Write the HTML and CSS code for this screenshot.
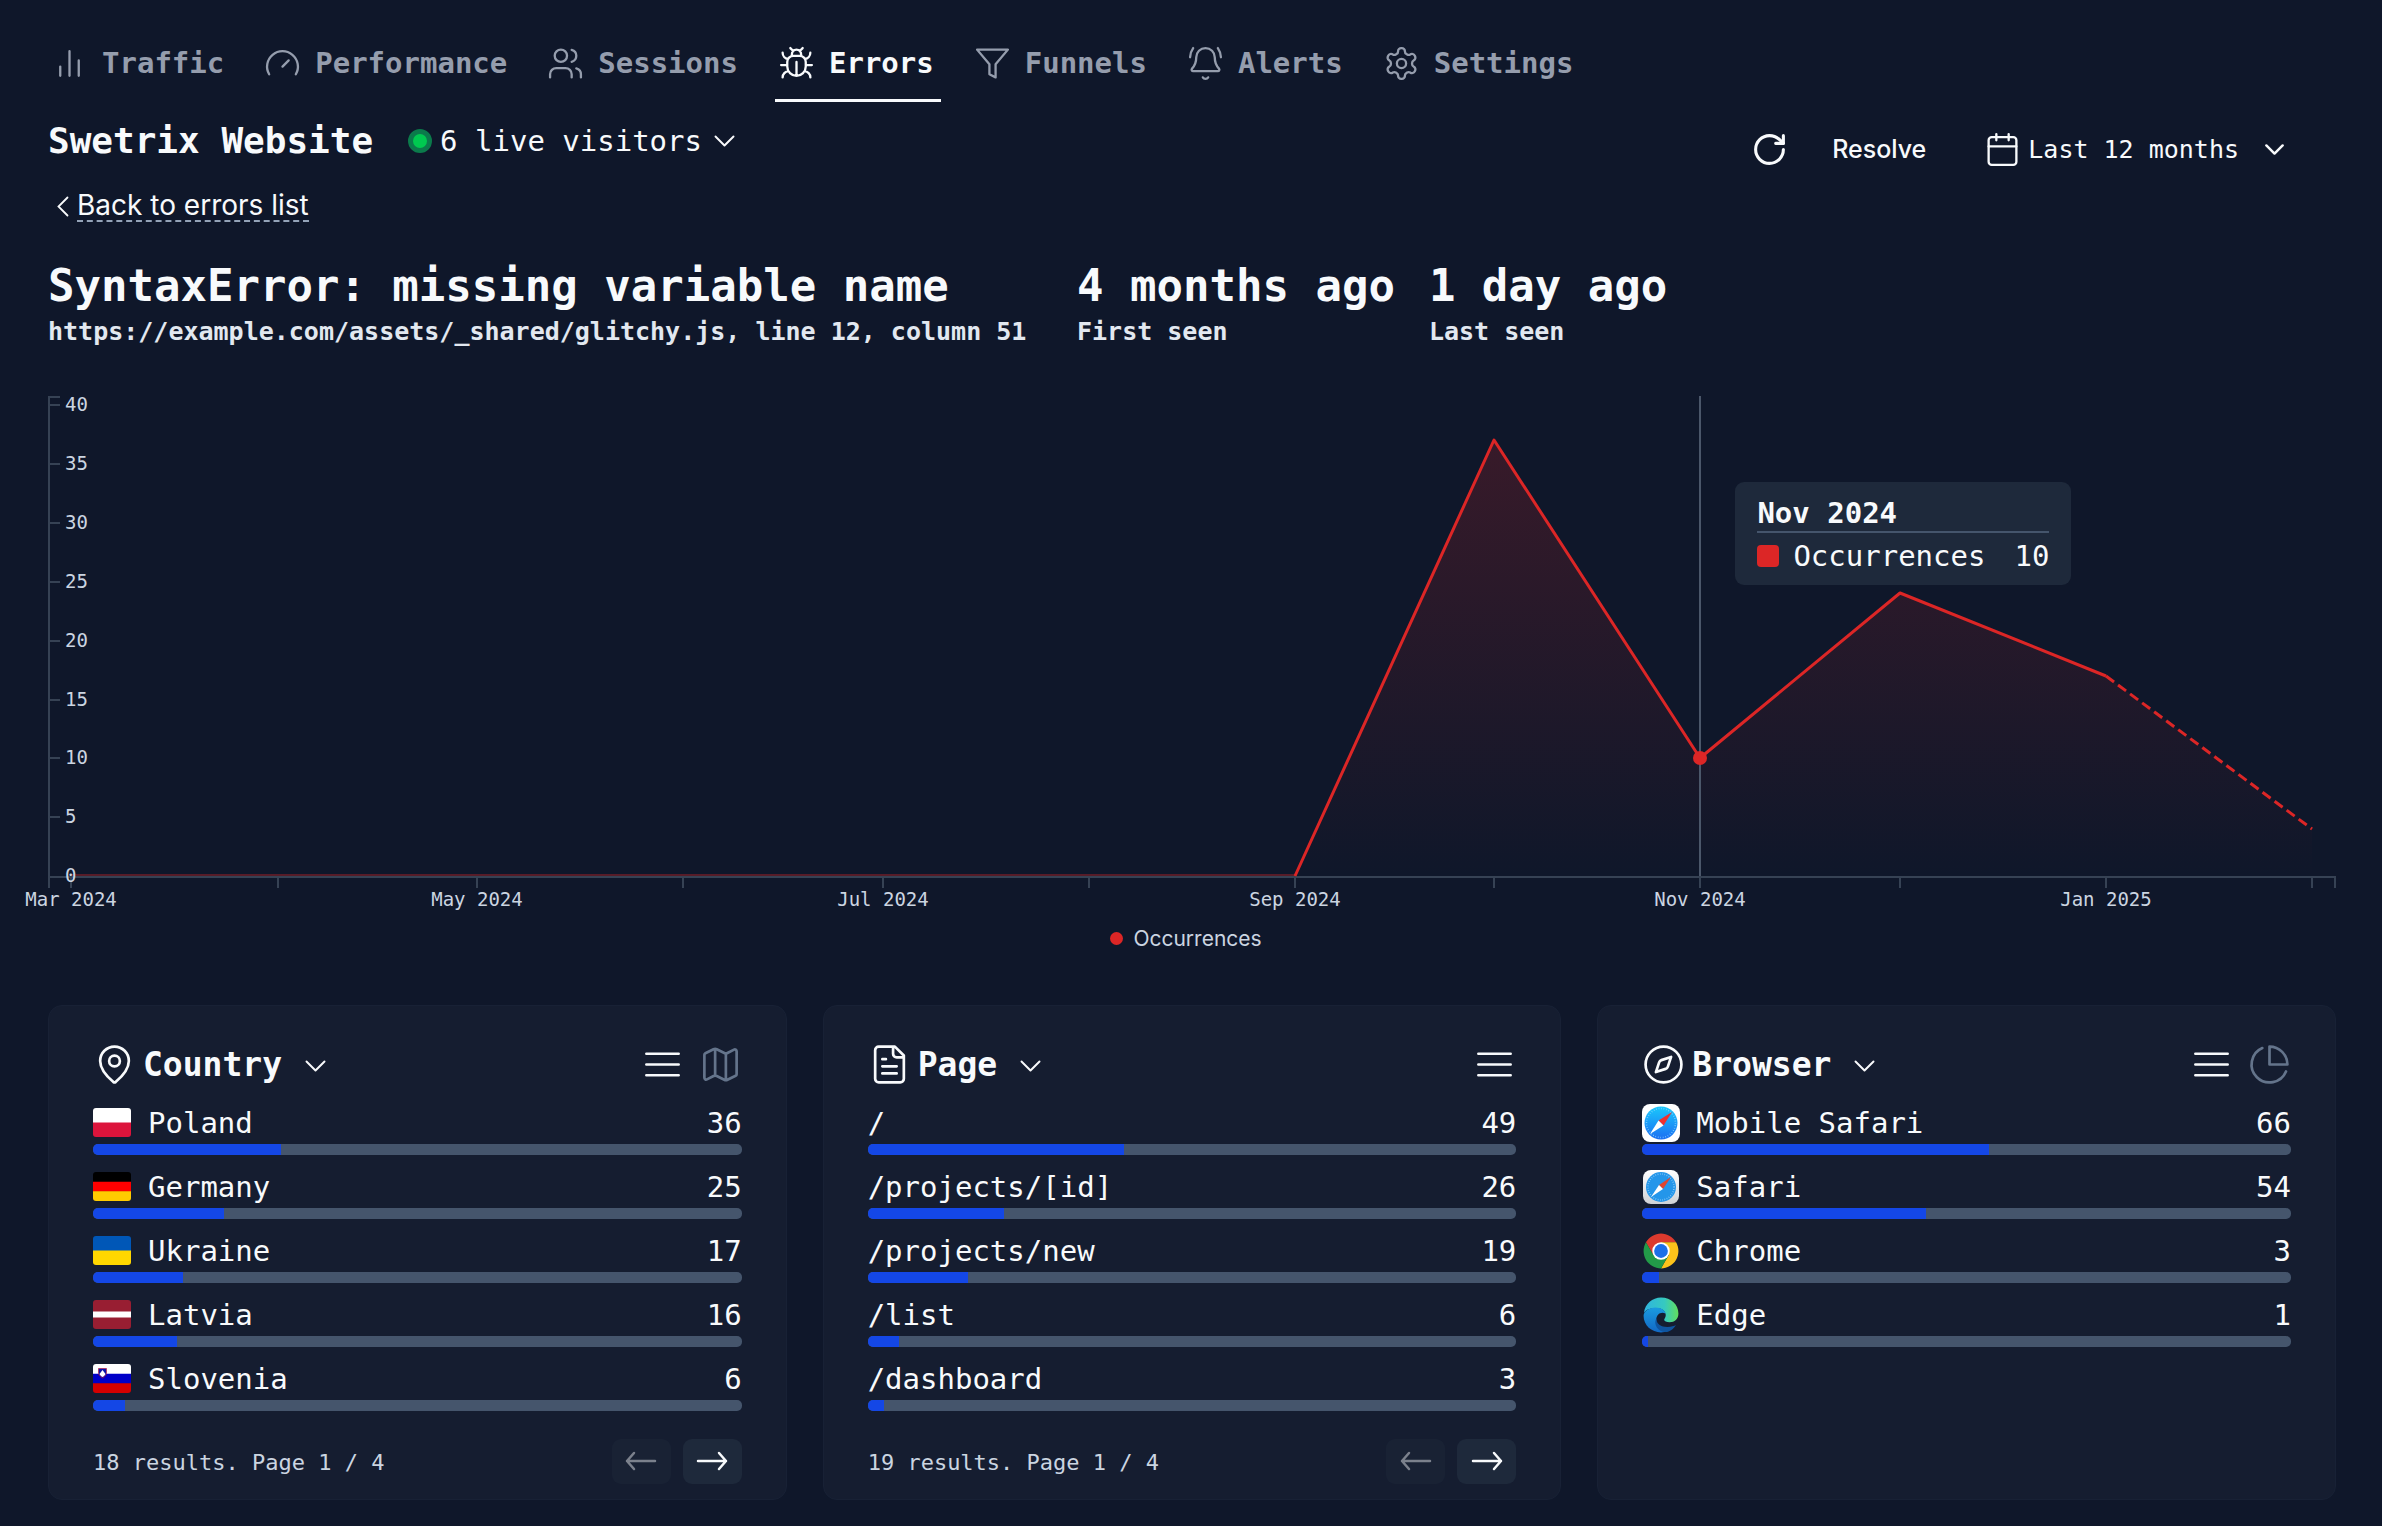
FILE: index.html
```html
<!DOCTYPE html>
<html lang="en">
<head>
<meta charset="utf-8">
<meta name="viewport" content="width=device-width, initial-scale=1">
<title>Swetrix Website – Errors</title>
<link rel="stylesheet" href="styles.css">
</head>
<body>
<svg class="defs" aria-hidden="true">
  <symbol id="chevron" viewBox="0 0 14 8"><path d="m1 1 6 6 6-6"/></symbol>
  <symbol id="bars" viewBox="0 0 24 24"><path d="M3 6h18M3 12h18M3 18h18"/></symbol>
  <symbol id="arrow-left" viewBox="0 0 32 20"><path d="M30 10H2M9 2l-7 8 7 8"/></symbol>
  <symbol id="arrow-right" viewBox="0 0 32 20"><path d="M2 10h28M23 2l7 8-7 8"/></symbol>
</svg>
<div class="page">
  <nav class="tabs" aria-label="Project sections">
    <a class="tab" href="#traffic"><svg class="icon" viewBox="0 0 24 24"><path d="M18 20V10M12 20V4M6 20v-6"/></svg>Traffic</a>
    <a class="tab" href="#performance"><svg class="icon" viewBox="0 0 24 24"><path d="m12 14 4-4M3.34 19a10 10 0 1 1 17.32 0"/></svg>Performance</a>
    <a class="tab" href="#sessions"><svg class="icon" viewBox="0 0 24 24"><path d="M16 21v-2a4 4 0 0 0-4-4H6a4 4 0 0 0-4 4v2M22 21v-2a4 4 0 0 0-3-3.87M16 3.13a4 4 0 0 1 0 7.75"/><circle cx="9" cy="7" r="4"/></svg>Sessions</a>
    <a class="tab tab-active" href="#errors" aria-current="page"><svg class="icon" viewBox="0 0 24 24"><path d="m8 2 1.88 1.88M14.12 3.88 16 2M9 7.13v-1a3.003 3.003 0 1 1 6 0v1M12 20c-3.3 0-6-2.7-6-6v-3a4 4 0 0 1 4-4h4a4 4 0 0 1 4 4v3c0 3.3-2.7 6-6 6M12 20v-9M6.53 9C4.6 8.8 3 7.1 3 5M6 13H2M3 21c0-2.1 1.7-3.9 3.8-4M20.97 5c0 2.1-1.6 3.8-3.5 4M22 13h-4M17.2 17c2.1.1 3.8 1.9 3.8 4"/></svg>Errors</a>
    <a class="tab" href="#funnels"><svg class="icon" viewBox="0 0 24 24"><path d="M22 3H2l8 9.46V19l4 2v-8.54z"/></svg>Funnels</a>
    <a class="tab" href="#alerts"><svg class="icon" viewBox="0 0 24 24"><path d="M10.268 21a2 2 0 0 0 3.464 0M22 8c0-2.3-.8-4.3-2-6M3.262 15.326A1 1 0 0 0 4 17h16a1 1 0 0 0 .74-1.673C19.41 13.956 18 12.499 18 8A6 6 0 0 0 6 8c0 4.499-1.411 5.956-2.738 7.326M4 2C2.8 3.7 2 5.7 2 8"/></svg>Alerts</a>
    <a class="tab" href="#settings"><svg class="icon" viewBox="0 0 24 24"><path d="M12.22 2h-.44a2 2 0 0 0-2 2v.18a2 2 0 0 1-1 1.73l-.43.25a2 2 0 0 1-2 0l-.15-.08a2 2 0 0 0-2.73.73l-.22.38a2 2 0 0 0 .73 2.73l.15.1a2 2 0 0 1 1 1.72v.51a2 2 0 0 1-1 1.74l-.15.09a2 2 0 0 0-.73 2.73l.22.38a2 2 0 0 0 2.73.73l.15-.08a2 2 0 0 1 2 0l.43.25a2 2 0 0 1 1 1.73V20a2 2 0 0 0 2 2h.44a2 2 0 0 0 2-2v-.18a2 2 0 0 1 1-1.73l.43-.25a2 2 0 0 1 2 0l.15.08a2 2 0 0 0 2.73-.73l.22-.39a2 2 0 0 0-.73-2.73l-.15-.08a2 2 0 0 1-1-1.74v-.5a2 2 0 0 1 1-1.74l.15-.09a2 2 0 0 0 .73-2.73l-.22-.38a2 2 0 0 0-2.73-.73l-.15.08a2 2 0 0 1-2 0l-.43-.25a2 2 0 0 1-1-1.73V4a2 2 0 0 0-2-2z"/><circle cx="12" cy="12" r="3"/></svg>Settings</a>
  </nav>

  <header class="header">
    <div class="project">
      <h1 class="project-name">Swetrix Website</h1>
      <button class="live" type="button"><span class="live-dot"></span>6 live visitors<svg class="chevron live-chevron"><use href="#chevron"/></svg></button>
    </div>
    <div class="controls">
      <button class="control" type="button" aria-label="Refresh"><svg class="icon icon-bold" viewBox="0 0 24 24"><path d="M21 12a9 9 0 1 1-9-9c2.52 0 4.93 1 6.74 2.74L21 8"/><path d="M21 3v5h-5"/></svg></button>
      <button class="control control-resolve" type="button">Resolve</button>
      <button class="control control-period" type="button"><svg class="icon" viewBox="0 0 24 24"><path d="M8 2v4M16 2v4M3 10h18"/><rect x="3" y="4" width="18" height="18" rx="2"/></svg>Last 12 months<svg class="chevron chevron-small"><use href="#chevron"/></svg></button>
    </div>
  </header>

  <a class="back" href="#errors"><svg class="back-icon" viewBox="0 0 8 14"><path d="M7 1 1 7l6 6"/></svg><span class="back-text">Back to errors list</span></a>

  <section class="stats">
    <div class="stat stat-main"><h2 class="stat-title">SyntaxError: missing variable name</h2><p class="stat-note">https://example.com/assets/_shared/glitchy.js, line 12, column 51</p></div>
    <div class="stat"><p class="stat-title">4 months ago</p><p class="stat-note">First seen</p></div>
    <div class="stat"><p class="stat-title">1 day ago</p><p class="stat-note">Last seen</p></div>
  </section>

  <section class="chart" aria-label="Occurrences over time">
    <svg class="plot" viewBox="0 0 2288 524">
      <defs><linearGradient id="fade" x1="0" y1="50" x2="0" y2="486" gradientUnits="userSpaceOnUse"><stop offset="0" stop-color="#dc2626" stop-opacity=".2"/><stop offset="1" stop-color="#dc2626" stop-opacity="0"/></linearGradient></defs>
      <path class="area" d="M1247 486 1446 50 1652 368 1852 203 2058 286 2264 439V486z"/>
      <path class="axis" d="M12 7H1V498M1 487H2287V498"/>
      <path class="ticks" d="M1 15h11M1 74h11M1 133h11M1 192h11M1 251h11M1 310h11M1 368h11M1 427h11M23 487v11M230 487v11M429 487v11M635 487v11M835 487v11M1041 487v11M1247 487v11M1446 487v11M1652 487v11M1852 487v11M2058 487v11M2264 487v11"/>
      <path class="zero" d="M23 485H1247"/>
      <path class="cursor" d="M1652 6V486"/>
      <path class="line" d="M1247 486 1446 50 1652 368 1852 203 2058 286"/>
      <path class="line dashed" d="M2058 286 2264 439"/>
      <circle class="dot" cx="1652" cy="368" r="7"/>
      <g class="labels">
        <text x="17" y="21">40</text><text x="17" y="80">35</text><text x="17" y="139">30</text><text x="17" y="198">25</text><text x="17" y="257">20</text><text x="17" y="316">15</text><text x="17" y="374">10</text><text x="17" y="433">5</text><text x="17" y="492">0</text>
      </g>
      <g class="labels months">
        <text x="23" y="516">Mar 2024</text><text x="429" y="516">May 2024</text><text x="835" y="516">Jul 2024</text><text x="1247" y="516">Sep 2024</text><text x="1652" y="516">Nov 2024</text><text x="2058" y="516">Jan 2025</text>
      </g>
    </svg>
    <div class="tooltip">
      <p class="tooltip-title">Nov 2024</p>
      <p class="tooltip-row"><span class="swatch"></span>Occurrences<span class="tooltip-value">10</span></p>
    </div>
    <p class="legend"><span class="legend-dot"></span>Occurrences</p>
  </section>

  <section class="panels">
    <article class="panel">
      <header class="panel-head">
        <button class="panel-title" type="button"><svg class="icon icon-large" viewBox="0 0 24 24"><path d="M20 10c0 4.993-5.539 10.193-7.399 11.799a1 1 0 0 1-1.202 0C9.539 20.193 4 14.993 4 10a8 8 0 0 1 16 0"/><circle cx="12" cy="10" r="3"/></svg>Country<svg class="chevron"><use href="#chevron"/></svg></button>
        <button class="view" type="button" aria-label="List"><svg class="icon icon-large"><use href="#bars"/></svg></button>
        <button class="view view-off" type="button" aria-label="Map"><svg class="icon icon-large" viewBox="0 0 24 24"><path d="M14.106 5.553a2 2 0 0 0 1.788 0l3.659-1.83A1 1 0 0 1 21 4.619v12.764a1 1 0 0 1-.553.894l-4.553 2.277a2 2 0 0 1-1.788 0l-4.212-2.106a2 2 0 0 0-1.788 0l-3.659 1.83A1 1 0 0 1 3 19.381V6.618a1 1 0 0 1 .553-.894l4.553-2.277a2 2 0 0 1 1.788 0zM15 5.764v15M9 3.236v15"/></svg></button>
      </header>
      <ul class="rows">
        <li class="row"><svg class="flag" viewBox="0 0 38 29"><path fill="#fff" d="M0 0h38v15H0z"/><path fill="#dc143c" d="M0 14.500h38V29H0z"/></svg><span class="name">Poland</span><span class="count">36</span><span class="track"><span class="fill" style="width:29%"></span></span></li>
        <li class="row"><svg class="flag" viewBox="0 0 38 29"><path d="M0 0h38v10H0z"/><path fill="#f00" d="M0 9.700h38v10H0z"/><path fill="#fc0" d="M0 19.300h38V29H0z"/></svg><span class="name">Germany</span><span class="count">25</span><span class="track"><span class="fill" style="width:20.2%"></span></span></li>
        <li class="row"><svg class="flag" viewBox="0 0 38 29"><path fill="#0057b7" d="M0 0h38v15H0z"/><path fill="#ffd700" d="M0 14.500h38V29H0z"/></svg><span class="name">Ukraine</span><span class="count">17</span><span class="track"><span class="fill" style="width:13.8%"></span></span></li>
        <li class="row"><svg class="flag" viewBox="0 0 38 29"><path fill="#981e32" d="M0 0h38v29H0z"/><path fill="#fff" d="M0 11.500h38v6H0z"/></svg><span class="name">Latvia</span><span class="count">16</span><span class="track"><span class="fill" style="width:13%"></span></span></li>
        <li class="row"><svg class="flag" viewBox="0 0 38 29"><path fill="#fff" d="M0 0h38v10H0z"/><path fill="#0000c8" d="M0 9.700h38v10H0z"/><path fill="#d50000" d="M0 19.300h38V29H0z"/><path fill="#0a12a8" stroke="#c8102e" stroke-width=".6" d="M5.500 4.500h8v4c0 3-2 4.500-4 5.500-2-1-4-2.500-4-5.500z"/><path fill="#fff" d="m6.500 10 1.500-2 1.500-2 1.500 2 1.500 2c-.6 1.500-1.700 2.400-3 3-1.300-.6-2.400-1.500-3-3z"/></svg><span class="name">Slovenia</span><span class="count">6</span><span class="track"><span class="fill" style="width:4.9%"></span></span></li>
      </ul>
      <footer class="pager"><span class="pager-text">18 results. Page 1 / 4</span><button class="page-btn" type="button" disabled aria-label="Previous page"><svg class="arrow"><use href="#arrow-left"/></svg></button><button class="page-btn" type="button" aria-label="Next page"><svg class="arrow"><use href="#arrow-right"/></svg></button></footer>
    </article>

    <article class="panel">
      <header class="panel-head">
        <button class="panel-title" type="button"><svg class="icon icon-large" viewBox="0 0 24 24"><path d="M15 2H6a2 2 0 0 0-2 2v16a2 2 0 0 0 2 2h12a2 2 0 0 0 2-2V7zM14 2v4a2 2 0 0 0 2 2h4M10 9H8M16 13H8M16 17H8"/></svg>Page<svg class="chevron"><use href="#chevron"/></svg></button>
        <button class="view" type="button" aria-label="List"><svg class="icon icon-large"><use href="#bars"/></svg></button>
      </header>
      <ul class="rows">
        <li class="row"><span class="name">/</span><span class="count">49</span><span class="track"><span class="fill" style="width:39.5%"></span></span></li>
        <li class="row"><span class="name">/projects/[id]</span><span class="count">26</span><span class="track"><span class="fill" style="width:21%"></span></span></li>
        <li class="row"><span class="name">/projects/new</span><span class="count">19</span><span class="track"><span class="fill" style="width:15.4%"></span></span></li>
        <li class="row"><span class="name">/list</span><span class="count">6</span><span class="track"><span class="fill" style="width:4.9%"></span></span></li>
        <li class="row"><span class="name">/dashboard</span><span class="count">3</span><span class="track"><span class="fill" style="width:2.5%"></span></span></li>
      </ul>
      <footer class="pager"><span class="pager-text">19 results. Page 1 / 4</span><button class="page-btn" type="button" disabled aria-label="Previous page"><svg class="arrow"><use href="#arrow-left"/></svg></button><button class="page-btn" type="button" aria-label="Next page"><svg class="arrow"><use href="#arrow-right"/></svg></button></footer>
    </article>

    <article class="panel">
      <header class="panel-head">
        <button class="panel-title" type="button"><svg class="icon icon-large" viewBox="0 0 24 24"><circle cx="12" cy="12" r="10"/><path d="m16.24 7.76-1.804 5.411a2 2 0 0 1-1.265 1.265L7.760 16.240l1.804-5.411a2 2 0 0 1 1.265-1.265z"/></svg>Browser<svg class="chevron"><use href="#chevron"/></svg></button>
        <button class="view" type="button" aria-label="List"><svg class="icon icon-large"><use href="#bars"/></svg></button>
        <button class="view view-off" type="button" aria-label="Pie chart"><svg class="icon icon-large" viewBox="0 0 24 24"><path d="M21.21 15.89A10 10 0 1 1 8 2.83"/><path d="M22 12A10 10 0 0 0 12 2v10z"/></svg></button>
      </header>
      <ul class="rows">
        <li class="row"><svg class="logo" viewBox="0 0 38 38"><defs><linearGradient id="sky" x2="0" y2="1"><stop stop-color="#1ac8fc"/><stop offset="1" stop-color="#1d6ff2"/></linearGradient></defs><rect width="38" height="38" rx="8" fill="#fff"/><circle cx="19" cy="19" r="16.500" fill="url(#sky)"/><circle cx="19" cy="19" r="14.500" fill="none" stroke="#8fd6ff" stroke-width="1.500" stroke-dasharray=".6 1.920"/><path fill="#f03030" d="m30 8-13.500 8.500 5 5z"/><path fill="#fff" d="m8 30 8.500-13.500 5 5z"/></svg><span class="name">Mobile Safari</span><span class="count">66</span><span class="track"><span class="fill" style="width:53.4%"></span></span></li>
        <li class="row"><svg class="logo" viewBox="0 0 38 38"><defs><linearGradient id="metal" x2="0" y2="1"><stop stop-color="#fff"/><stop offset="1" stop-color="#cfd2d6"/></linearGradient></defs><rect x="1" y="2" width="36" height="34" rx="8" fill="url(#metal)"/><circle cx="19" cy="19" r="15" fill="#2496ea"/><circle cx="19" cy="19" r="13" fill="none" stroke="#9bd3fa" stroke-width="1.500" stroke-dasharray=".6 1.700"/><path fill="#e0452f" d="M29 9 17 17l4 4z"/><path fill="#fff" d="m9 29 8-12 4 4z"/></svg><span class="name">Safari</span><span class="count">54</span><span class="track"><span class="fill" style="width:43.7%"></span></span></li>
        <li class="row"><svg class="logo" viewBox="0 1 48 46"><path fill="#db3a2e" d="M4.950 13A22 22 0 0 1 43.050 13H24L14.470 29.500z"/><path fill="#fcc21b" d="M43.050 13A22 22 0 0 1 24 46l9.530-16.500L24 13z"/><path fill="#229a48" d="M24 46A22 22 0 0 1 4.950 13l9.520 16.500h19.060z"/><circle cx="24" cy="24" r="11" fill="#fff"/><circle cx="24" cy="24" r="8.700" fill="#1b6fe8"/></svg><span class="name">Chrome</span><span class="count">3</span><span class="track"><span class="fill" style="width:2.5%"></span></span></li>
        <li class="row"><svg class="logo" viewBox="0 0 24 24"><defs><linearGradient id="edge-top"><stop stop-color="#2fb4e0"/><stop offset=".6" stop-color="#36c9c0"/><stop offset="1" stop-color="#62de5c"/></linearGradient><linearGradient id="edge-body" x2="0" y2="1"><stop stop-color="#1a9be0"/><stop offset="1" stop-color="#1268c4"/></linearGradient></defs><path fill="url(#edge-top)" d="M1.200 10.500C2 5 6.500 1 12 1c6.500 0 11 4.500 11 10 0 3.500-2.500 5.500-5.500 5.500-2 0-3.500-.7-3.500-1.500 0-.7 1-1.200 1-3 0-2.500-2.500-4.500-6-4.500s-6.500 1-7.800 3z"/><path fill="url(#edge-body)" d="M1 12.500c0-3 3.500-5.300 7.500-5.300 3.500 0 6 1.800 6.300 3.800C12 9.600 9 11.500 9 15c0 4 3.500 7 7 7.300-1.200.5-2.500.7-4 .7-6 0-11-4.500-11-10.500z"/><path fill="#0f549f" d="M9 14c0 3.500 3 5.500 7 5.500 2.500 0 4.500-.7 5.400-1.200-1.400 2.700-3.900 4.300-6.400 4.500-5-.2-8-4.800-6-8.800z"/></svg><span class="name">Edge</span><span class="count">1</span><span class="track"><span class="fill" style="width:0.8%"></span></span></li>
      </ul>
    </article>
  </section>
</div>
</body>
</html>
```

FILE: styles.css
```css
* { box-sizing: border-box; margin: 0; padding: 0; }

body {
  background: #0f172a;
  color: #f8fafc;
  font-family: "DejaVu Sans Mono", "Liberation Mono", monospace;
  font-size: 29px;
}

button {
  background: none;
  border: 0;
  color: inherit;
  font: inherit;
  cursor: pointer;
}

a { color: inherit; text-decoration: none; }
ul { list-style: none; }
.defs { display: none; }

.page { padding: 27px 46px 24px 48px; }

.icon {
  width: 37px;
  height: 37px;
  flex: none;
  display: block;
  fill: none;
  stroke: currentColor;
  stroke-width: 1.5;
  stroke-linecap: round;
  stroke-linejoin: round;
}
.icon-bold { stroke-width: 2; }
.icon-large { width: 43px; height: 43px; }

.chevron {
  width: 21px;
  height: 12px;
  flex: none;
  fill: none;
  stroke: currentColor;
  stroke-width: 1.3;
  stroke-linecap: round;
  stroke-linejoin: round;
}
.chevron-small { width: 19px; height: 11px; stroke-width: 1.8; }

/* Section tabs */
.tabs { display: flex; gap: 30px; }
.tab {
  display: flex;
  align-items: center;
  gap: 14px;
  padding: 18px 7px 17px 3px;
  border-bottom: 3px solid transparent;
  color: #959dad;
  font-weight: 700;
  line-height: 37px;
}
.tab-active { color: #f8fafc; border-color: #f8fafc; }

/* Project header */
.header {
  display: flex;
  justify-content: space-between;
  align-items: flex-start;
  padding-top: 17px;
}
.project { display: flex; align-items: center; gap: 35px; line-height: 44px; }
.project-name { font-size: 36px; font-weight: 700; }
.live { display: flex; align-items: center; gap: 8px; line-height: 44px; }
.live-dot {
  width: 24px;
  height: 24px;
  border: 5px solid #0b7a4b;
  border-radius: 50%;
  background: #00c950;
}
.live-chevron { margin-left: 4px; }

.controls { display: flex; padding: 1px 32px 0 0; }
.control {
  display: flex;
  align-items: center;
  height: 58px;
  padding: 0 20px;
  font-size: 25px;
}
.control-resolve { padding: 0 38px 0 24px; font-family: Inter, sans-serif; font-weight: 500; }
.control-period { gap: 7px; }
.control-period .chevron { margin-left: 19px; }

.back {
  display: inline-flex;
  align-items: center;
  gap: 8px;
  margin: 12px 0 0 9px;
  font: 28px/36px Inter, sans-serif;
}
.back-icon {
  width: 12px;
  height: 21px;
  fill: none;
  stroke: currentColor;
  stroke-width: 1.2;
  stroke-linecap: round;
}
.back-text { line-height: 30px; border-bottom: 2px dashed #94a3b8; }

/* Error summary */
.stats { display: flex; flex-wrap: wrap; gap: 34px; margin-top: 38px; }
.stat-main { min-width: 995px; }
.stat-title { font-size: 44px; line-height: 48px; font-weight: 700; }
.stat-note {
  margin-top: 4px;
  color: #e2e8f0;
  font-size: 25px;
  line-height: 36px;
  font-weight: 700;
}

/* Chart */
.chart { position: relative; margin-top: 40px; }
.plot { display: block; width: 100%; height: auto; overflow: visible; }
.area { fill: url(#fade); }
.axis, .ticks { fill: none; stroke: #364254; stroke-width: 2; }
.cursor { stroke: #4b576a; stroke-width: 2; }
.line { fill: none; stroke: #dc2626; stroke-width: 3; stroke-linejoin: round; }
.dashed { stroke-dasharray: 10 5; }
.zero { stroke: #dc2626; stroke-width: 2; opacity: .35; }
.dot { fill: #dc2626; }
.labels { fill: #cbd5e1; font-size: 19px; }
.months { text-anchor: middle; }

.tooltip {
  position: absolute;
  top: 92px;
  left: 73.75%;
  padding: 13px 22px 11px;
  border-radius: 9px;
  background: #1e293b;
  line-height: 36px;
}
.tooltip-title { border-bottom: 2px solid #45556c; font-weight: 700; }
.tooltip-row { display: flex; align-items: center; padding-top: 5px; }
.swatch { width: 22px; height: 22px; margin-right: 14px; border-radius: 4px; background: #dc2626; }
.tooltip-value { margin-left: 29px; }

.legend {
  display: flex;
  align-items: center;
  justify-content: center;
  gap: 10px;
  padding: 11px 12px 0 0;
  color: #cbd5e1;
  font: 21px/28px Inter, sans-serif;
}
.legend-dot { width: 13px; height: 13px; border-radius: 50%; background: #dc2626; }

/* Breakdown panels */
.panels {
  display: grid;
  grid-template-columns: repeat(3, minmax(0, 1fr));
  gap: 36px;
  margin-top: 52px;
}
.panel {
  padding: 37px 44px 15px 44px;
  border: 1px solid #182135;
  border-radius: 14px;
  background: #151d30;
}
.panel-head { display: flex; align-items: center; gap: 15px; margin-bottom: 16px; }
.panel-title {
  display: flex;
  align-items: center;
  gap: 7px;
  margin-right: auto;
  font-size: 33px;
  line-height: 43px;
  font-weight: 700;
}
.panel-title .chevron { margin: 4px 0 0 16px; }
.view-off { color: #64748b; }

.rows { display: grid; gap: 11px; }
.row { display: flex; flex-wrap: wrap; align-items: center; line-height: 42px; }
.flag { width: 38px; height: 29px; margin-right: 17px; border-radius: 3px; }
.logo { width: 38px; height: 38px; margin-right: 16px; }
.name { flex: 1; }
.track {
  flex: 0 0 100%;
  height: 11px;
  overflow: hidden;
  border-radius: 5px;
  background: #45556c;
}
.fill { display: block; height: 100%; background: #1447e6; }

.pager { display: flex; align-items: center; gap: 12px; margin-top: 28px; }
.pager-text { margin-right: auto; padding-top: 3px; color: #cbd5e1; font-size: 22px; }
.page-btn {
  display: grid;
  place-items: center;
  width: 59px;
  height: 45px;
  border-radius: 9px;
  background: #1e293b;
}
.page-btn:disabled { opacity: .45; }
.arrow {
  width: 32px;
  height: 20px;
  fill: none;
  stroke: currentColor;
  stroke-width: 2.5;
  stroke-linecap: round;
  stroke-linejoin: round;
}
```
